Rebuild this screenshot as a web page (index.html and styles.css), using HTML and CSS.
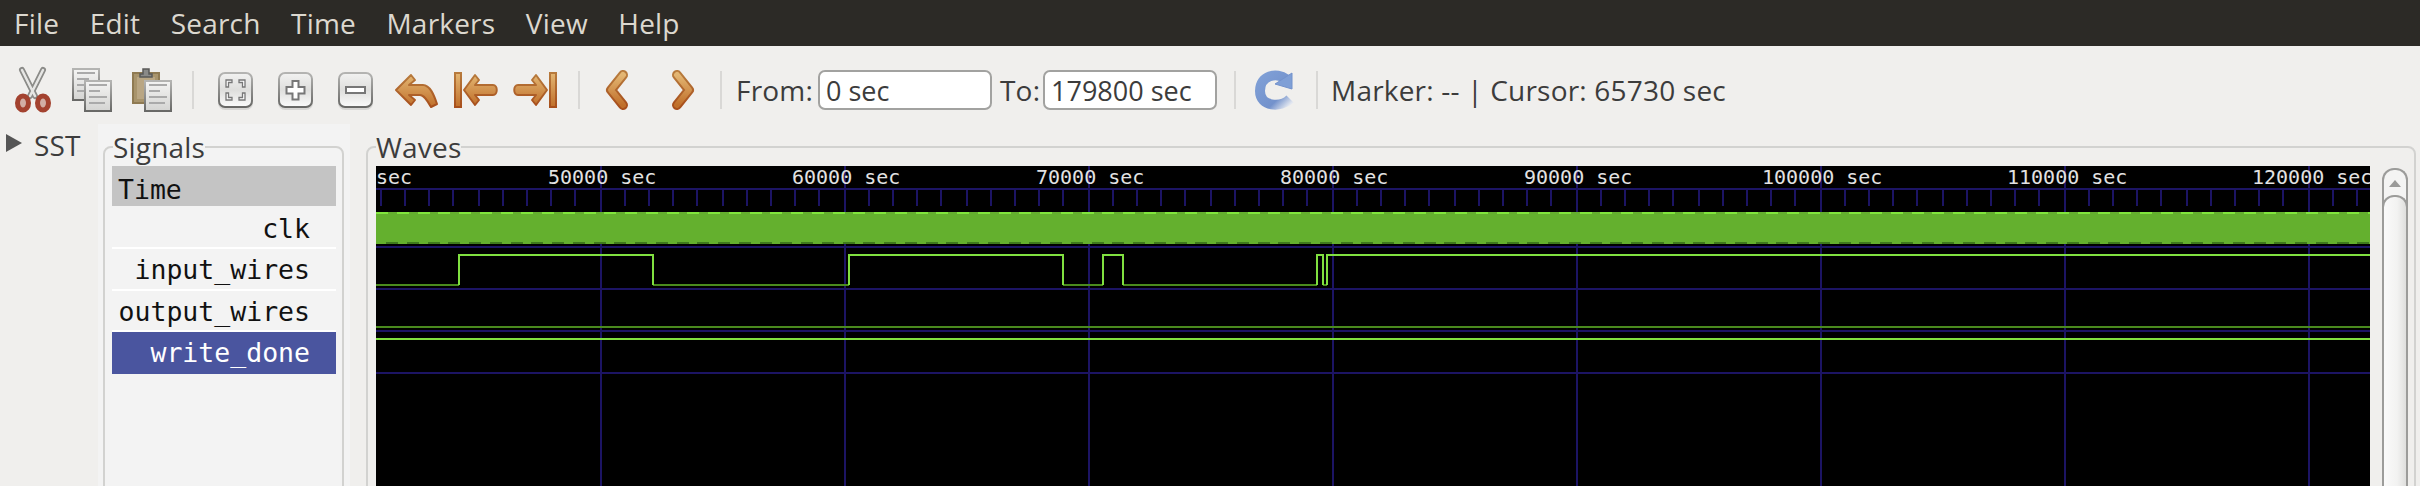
FILE: index.html
```html
<!DOCTYPE html>
<html lang="en">
<head>
    <meta charset="UTF-8">
    <meta name="viewport" content="width=device-width, initial-scale=1.0">
    <title>GTKWave</title>
    <link rel="stylesheet" href="styles.css">
</head>
<body>
    <nav id="menubar">
        <span class="menu-item">File</span>
        <span class="menu-item">Edit</span>
        <span class="menu-item">Search</span>
        <span class="menu-item">Time</span>
        <span class="menu-item">Markers</span>
        <span class="menu-item">View</span>
        <span class="menu-item">Help</span>
    </nav>

    <div id="toolbar">
        <svg class="tool" viewBox="2 60 60 60">
            <defs>
                <linearGradient id="paper" x1="0" y1="0" x2="0" y2="1">
                    <stop offset="0" stop-color="#f4f4f3"/>
                    <stop offset="1" stop-color="#d4d4d2"/>
                </linearGradient>
                <linearGradient id="edge" x1="0" y1="0" x2="0" y2="1">
                    <stop offset="0" stop-color="#b4b4b2"/>
                    <stop offset="1" stop-color="#686866"/>
                </linearGradient>
                <linearGradient id="knob" x1="0" y1="0" x2="0" y2="1">
                    <stop offset="0" stop-color="#f2f2f1"/>
                    <stop offset="0.5" stop-color="#dededc"/>
                    <stop offset="1" stop-color="#fbfbfb"/>
                </linearGradient>
                <linearGradient id="amber" x1="0" y1="0" x2="0" y2="1">
                    <stop offset="0" stop-color="#e3b673"/>
                    <stop offset="1" stop-color="#c06f2a"/>
                </linearGradient>
                <linearGradient id="rim" x1="0" y1="0" x2="0" y2="1">
                    <stop offset="0" stop-color="#b77a3c"/>
                    <stop offset="1" stop-color="#a84f1c"/>
                </linearGradient>
                <linearGradient id="reload" x1="0" y1="0" x2="1" y2="1">
                    <stop offset="0" stop-color="#7f9fd6"/>
                    <stop offset="0.7" stop-color="#7392cc"/>
                    <stop offset="1" stop-color="#e4e8f0"/>
                </linearGradient>
            </defs>
            <g fill="none" stroke-linecap="round">
                <path d="M22 70L35 96M43 70L30 96" stroke="#8b8b88" stroke-width="6"/>
                <path d="M22 70L35 96M43 70L30 96" stroke="#e6e6e4" stroke-width="2.5"/>
                <ellipse cx="23" cy="103" rx="5.5" ry="7" fill="#d2aea4" stroke="#a3422f" stroke-width="5"/>
                <ellipse cx="43" cy="103" rx="5.5" ry="7" fill="#d2aea4" stroke="#a3422f" stroke-width="5"/>
            </g>
        </svg>
        <svg class="tool" viewBox="62 60 60 60">
            <rect x="73" y="69" width="26" height="31" fill="url(#paper)" stroke="url(#edge)" stroke-width="2"/>
            <path d="M77 73h18M77 79h12M77 85h8M77 91h8" stroke="#aaa" stroke-width="2"/>
            <rect x="85" y="81" width="26" height="30" fill="url(#paper)" stroke="url(#edge)" stroke-width="2"/>
            <path d="M89 85h18M89 91h11M89 97h18M89 103h16" stroke="#aaa" stroke-width="2"/>
        </svg>
        <svg class="tool" viewBox="122 60 60 60">
            <rect x="133" y="73" width="26" height="30" fill="#a8946c" stroke="#8f7a52" stroke-width="2"/>
            <rect x="137" y="77" width="18" height="22" fill="#b9a683"/>
            <path d="M143 69h6v5h3v3h-12v-3h3z" fill="#8a8a88" stroke="#5a5a58" stroke-width="1.5"/>
            <rect x="145" y="81" width="26" height="30" fill="url(#paper)" stroke="url(#edge)" stroke-width="2"/>
            <path d="M149 85h18M149 91h11M149 97h18M149 103h16" stroke="#aaa" stroke-width="2"/>
        </svg>
        <span class="sep sep-first"></span>
        <svg class="tool" viewBox="205 60 60 60">
            <rect x="218" y="75" width="35" height="35" rx="7" fill="#000" opacity="0.1"/>
            <rect x="219" y="73" width="33" height="34" rx="6" fill="url(#knob)" stroke="url(#edge)" stroke-width="2"/>
            <path d="M232 80h-6v7h2.500v-4.500h3.500zM239 80h6v7h-2.500v-4.500h-3.500zM232 100h-6v-7h2.500v4.500h3.500zM239 100h6v-7h-2.500v4.500h-3.500z" fill="#fff" stroke="#777" stroke-width="1.300"/>
        </svg>
        <svg class="tool" viewBox="265 60 60 60">
            <rect x="278" y="75" width="35" height="35" rx="7" fill="#000" opacity="0.1"/>
            <rect x="279" y="73" width="33" height="34" rx="6" fill="url(#knob)" stroke="url(#edge)" stroke-width="2"/>
            <path d="M292.500 81h6v6h6v6.500h-6v6h-6v-6h-6v-6.500h6z" fill="#fff" stroke="#777" stroke-width="2"/>
        </svg>
        <svg class="tool" viewBox="325 60 60 60">
            <rect x="338" y="75" width="35" height="35" rx="7" fill="#000" opacity="0.1"/>
            <rect x="339" y="73" width="33" height="34" rx="6" fill="url(#knob)" stroke="url(#edge)" stroke-width="2"/>
            <rect x="346" y="87" width="19" height="6" fill="#fff" stroke="#777" stroke-width="2"/>
        </svg>
        <svg class="tool" viewBox="385 60 60 60">
            <path d="M396 90L411 75L415 80L409 85H423C430 85 434 95 437 104L431 107C427 100 424 95 420 95H409L415 100L411 105Z" fill="url(#amber)" stroke="url(#rim)" stroke-width="2" stroke-linejoin="round"/>
        </svg>
        <svg class="tool" viewBox="445 60 60 60">
            <rect x="455" y="73" width="6" height="34" fill="url(#amber)" stroke="url(#rim)" stroke-width="2"/>
            <path d="M464 90L475 75L479 80L475 85H493C498 85 498 95 493 95H475L479 100L475 105Z" fill="url(#amber)" stroke="url(#rim)" stroke-width="2" stroke-linejoin="round"/>
        </svg>
        <svg class="tool" viewBox="505 60 60 60">
            <rect x="550" y="73" width="6" height="34" fill="url(#amber)" stroke="url(#rim)" stroke-width="2"/>
            <path d="M547 90L536 75L532 80L536 85H518C513 85 513 95 518 95H536L532 100L536 105Z" fill="url(#amber)" stroke="url(#rim)" stroke-width="2" stroke-linejoin="round"/>
        </svg>
        <span class="sep sep-nav"></span>
        <svg class="tool" viewBox="590 60 60 60">
            <path d="M623 75L611 90L623 105" fill="none" stroke="url(#rim)" stroke-width="10" stroke-linecap="round" stroke-linejoin="round"/>
            <path d="M623 75L611 90L623 105" fill="none" stroke="url(#amber)" stroke-width="6" stroke-linecap="round" stroke-linejoin="round"/>
        </svg>
        <svg class="tool" viewBox="650 60 60 60">
            <path d="M677 75L689 90L677 105" fill="none" stroke="url(#rim)" stroke-width="10" stroke-linecap="round" stroke-linejoin="round"/>
            <path d="M677 75L689 90L677 105" fill="none" stroke="url(#amber)" stroke-width="6" stroke-linecap="round" stroke-linejoin="round"/>
        </svg>
        <span class="sep sep-range"></span>
        <label class="range-label from-label" for="fromTime">From:</label>
        <input class="range-input" id="fromTime" type="text" value="0 sec">
        <label class="range-label to-label" for="toTime">To:</label>
        <input class="range-input" id="toTime" type="text" value="179800 sec">
        <span class="sep sep-reload"></span>
        <svg class="tool" viewBox="1244 60 60 60">
            <path d="M1287 79C1278 72 1261 75 1261 91C1261 107 1282 108 1291 99" fill="none" stroke="url(#reload)" stroke-width="10"/>
            <path d="M1293 73V89L1276 84Z" fill="#7f9fd6" stroke="#7392cc"/>
        </svg>
        <span class="sep sep-status"></span>
        <span class="status">Marker: -- | Cursor: 65730 sec</span>
    </div>

    <div id="main">
        <aside id="hierarchy">
            <span class="expander"></span>
            <span class="hierarchy-label">SST</span>
        </aside>

        <section id="signalPane">
            <fieldset class="frame signal-frame">
                <legend>Signals</legend>
                <div class="signal-row time-row">Time</div>
                <div class="signal-row">clk</div>
                <div class="signal-row">input_wires</div>
                <div class="signal-row">output_wires</div>
                <div class="signal-row selected-row">write_done</div>
            </fieldset>
        </section>

        <section id="wavePane">
            <fieldset class="frame wave-frame">
                <legend>Waves</legend>
                <div class="wave-body">
                    <svg class="wave-canvas" viewBox="376 166 1994 320" shape-rendering="crispEdges">
                        <defs>
                            <pattern id="ticks" patternUnits="userSpaceOnUse" x="357" y="190" width="244" height="16">
                                <path d="M24 0v16M48 0v16M72 0v16M96 0v16M122 0v16M146 0v16M170 0v16M194 0v16M218 0v16" stroke="#1c1464" stroke-width="2"/>
                            </pattern>
                        </defs>
                        <rect x="376" y="166" width="1994" height="320" fill="#000"/>

                        <!-- grid -->
                        <rect x="376" y="190" width="1994" height="16" fill="url(#ticks)"/>
                        <g stroke="#1c1464" stroke-width="2">
                            <path d="M601 166V486M845 166V486M1089 166V486M1333 166V486M1577 166V486M1821 166V486M2065 166V486M2309 166V486"/>
                            <path d="M376 189H2370M376 247H2370M376 289H2370M376 331H2370M376 373H2370"/>
                        </g>

                        <!-- time labels -->
                        <g class="time-label">
                            <text x="376" y="184">sec</text>
                            <text x="548" y="184">50000 sec</text>
                            <text x="792" y="184">60000 sec</text>
                            <text x="1036" y="184">70000 sec</text>
                            <text x="1280" y="184">80000 sec</text>
                            <text x="1524" y="184">90000 sec</text>
                            <text x="1762" y="184">100000 sec</text>
                            <text x="2007" y="184">110000 sec</text>
                            <text x="2252" y="184">120000 sec</text>
                        </g>

                        <!-- clk -->
                        <rect x="376" y="212" width="1994" height="32" fill="#64b02e"/>
                        <path d="M376 213H2370" stroke="#80e53c" stroke-width="2" stroke-dasharray="12 8.750"/>
                        <path d="M386 243H2370" stroke="#3f7a1c" stroke-width="2" stroke-dasharray="12 8.750"/>

                        <!-- input_wires -->
                        <path d="M376 285H459M653 285H849M1063 285H1103M1123 285H1317M1323 285H1327" fill="none" stroke="#4a8a1e" stroke-width="2"/>
                        <path d="M459 285V255H653V285M849 285V255H1063V285M1103 285V255H1123V285M1317 285V255H1323V285M1327 285V255H2370" fill="none" stroke="#80e040" stroke-width="2"/>

                        <!-- output_wires -->
                        <path d="M376 327H2370" stroke="#4a8a1e" stroke-width="2"/>

                        <!-- write_done -->
                        <path d="M376 339H2370" stroke="#80e040" stroke-width="2"/>
                    </svg>
                    <div class="scrollbar">
                        <span class="scroll-arrow"></span>
                        <div class="scroll-thumb"></div>
                    </div>
                </div>
            </fieldset>
        </section>
    </div>
</body>
</html>
```

FILE: styles.css
```css
/* General Styles */
html, body {
    height: 486px;
}
body {
    margin: 0;
    overflow: hidden;
    font-family: 'Open Sans', sans-serif;
    font-size: 28px;
    letter-spacing: 0.2px;
    background: #f0efed;
    color: #3c3c3c;
}

/* Menu Bar */
#menubar {
    display: flex;
    align-items: center;
    gap: 30.5px;
    height: 46px;
    padding-left: 14px;
    background: #2c2a26;
    color: #dcd8cf;
}

/* Toolbar */
#toolbar {
    display: flex;
    align-items: center;
    box-sizing: border-box;
    height: 78px;
    padding: 10px 0 0 2px;
    background: #f0efed;
}
.tool {
    flex: 0 0 60px;
    width: 60px;
    height: 60px;
}
.sep {
    flex: 0 0 2px;
    height: 38px;
    background: #d9d8d6;
}
.sep-first {
    margin: 0 11px 0 10px;
}
.sep-nav {
    margin: 0 10px 0 13px;
}
.sep-range {
    margin: 0 14px 0 10px;
}
.sep-reload {
    margin: 0 7px 0 17px;
}
.sep-status {
    margin: 0 13px 0 13px;
}
.range-label {
    white-space: nowrap;
}
.from-label {
    flex: 0 0 82px;
}
.to-label {
    flex: 0 0 43px;
    margin-left: 8px;
}
.range-input {
    box-sizing: border-box;
    flex: 0 0 174px;
    width: 174px;
    height: 40px;
    padding: 0 6px;
    border: 2px solid #a2a2a0;
    border-radius: 7px;
    background: #fff;
    color: #3c3c3c;
    font-family: inherit;
    font-size: 27px;
}
.status {
    white-space: nowrap;
}

/* Main Panes */
#main {
    display: flex;
    height: 362px;
    overflow: hidden;
}
#hierarchy {
    display: flex;
    align-items: flex-start;
    flex: 0 0 98px;
    box-sizing: border-box;
    padding: 6px 0 0 6px;
}
.expander {
    width: 0;
    height: 0;
    margin: 4px 12px 0 0;
    border-left: 16px solid #555;
    border-top: 9px solid transparent;
    border-bottom: 9px solid transparent;
}
.hierarchy-label {
    line-height: 30px;
}
#signalPane {
    flex: 0 0 252px;
    box-sizing: border-box;
    padding: 8px 6px 0 5px;
    background: #f3f3f3;
}
#wavePane {
    flex: 1;
    min-width: 0;
    padding: 8px 4px 0 16px;
}

/* Frames */
.frame {
    box-sizing: border-box;
    min-width: 0;
    height: 500px;
    margin: 0;
    border: 2px solid #d2d2d0;
    border-radius: 8px;
}
.frame legend {
    padding: 0;
    line-height: 30px;
}
.signal-frame {
    padding: 4px 6px 0 7px;
}
.signal-frame legend {
    margin-left: 1px;
}
.wave-frame {
    padding: 4px 6px 0 8px;
}

/* Signal Names */
.signal-row {
    box-sizing: border-box;
    height: 41.5px;
    padding-right: 26px;
    border-bottom: 2px solid #fff;
    font-family: 'DejaVu Sans Mono', monospace;
    font-size: 26.5px;
    letter-spacing: 0;
    line-height: 42px;
    text-align: right;
    color: #111;
}
.time-row {
    padding-left: 6px;
    background: #c4c4c4;
    text-align: left;
    border-bottom-color: #f3f3f3;
    line-height: 48px;
}
.selected-row {
    background: #4a559f;
    color: #fff;
    border-bottom-color: transparent;
}

/* Wave Canvas */
.wave-body {
    display: flex;
    gap: 12px;
}
.wave-canvas {
    flex: 0 0 1994px;
    width: 1994px;
    height: 320px;
}
.time-label {
    font-family: 'DejaVu Sans Mono', monospace;
    font-size: 20px;
    letter-spacing: 0;
    fill: #e2e2e2;
}

/* Scrollbar */
.scrollbar {
    position: relative;
    flex: 0 0 26px;
    box-sizing: border-box;
    height: 340px;
    margin-top: 2px;
    border: 2px solid #9c9c9a;
    border-bottom: none;
    border-radius: 12px 12px 0 0;
    background: #f4f4f3;
}
.scroll-arrow {
    display: block;
    width: 0;
    margin: 10px auto 0;
    border-left: 6px solid transparent;
    border-right: 6px solid transparent;
    border-bottom: 7px solid #9a9a98;
}
.scroll-thumb {
    box-sizing: border-box;
    height: 320px;
    margin: 8px -2px 0;
    border: 2px solid #9c9c9a;
    border-bottom: none;
    border-radius: 12px 12px 0 0;
    background: linear-gradient(90deg, #fafafa, #f2f2f1 60%, #dfdfdd);
}
```
